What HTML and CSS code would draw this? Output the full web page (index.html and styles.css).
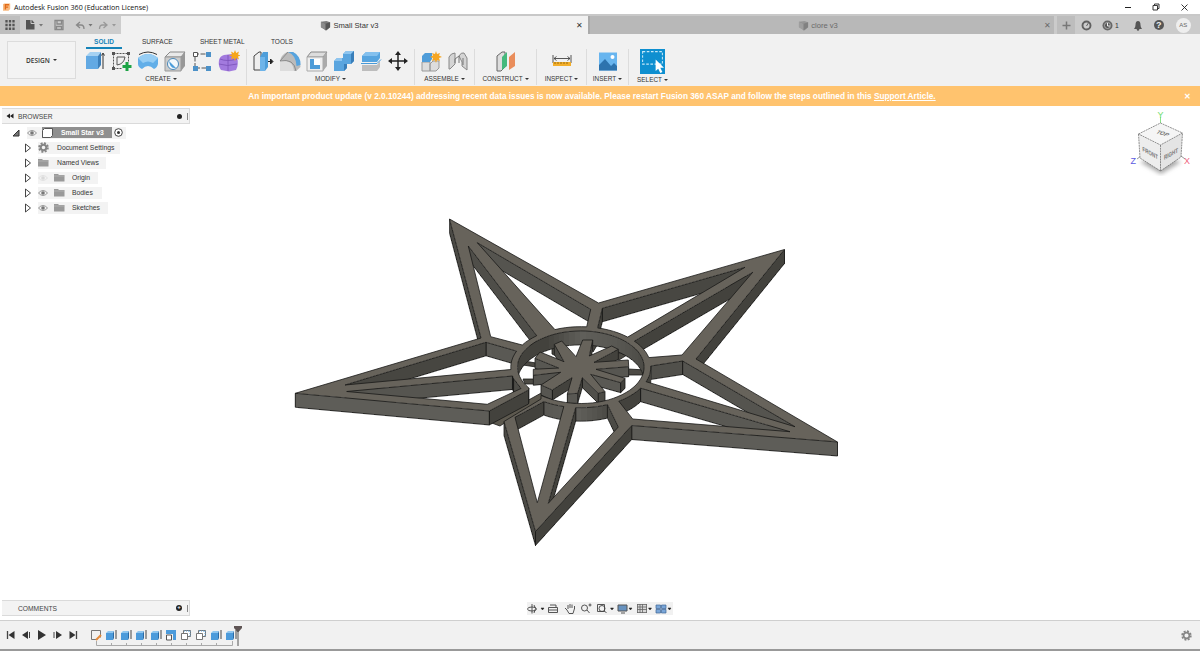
FILE: index.html
```html
<!DOCTYPE html>
<html lang="en">
<head>
<meta charset="utf-8">
<title>Autodesk Fusion 360</title>
<link rel="stylesheet" href="styles.css">
</head>
<body>
<svg class="defs" width="0" height="0">
  <defs>
    <symbol id="body" viewBox="0 0 22 22"><path d="M3 6l4-4h11l-3 4z" fill="#a5d1f2"/><path d="M3 6h12v13H3z" fill="#62a9e3"/><path d="M15 6l3-4v13l-3 4z" fill="#3b7fba"/></symbol>
    <symbol id="folder" viewBox="0 0 11 9"><path d="M0 1h4l1 1h5.500v6.500H0z" fill="#9a9a9a"/><path d="M0 3h10.500" stroke="#c4c4c4" stroke-width=".5"/></symbol>
    <symbol id="eye" viewBox="0 0 11 8"><path d="M.5 4Q5.500-1.500 10.500 4 5.500 9.500.5 4z" fill="#f2f2f2" stroke="#8d8d8d"/><circle cx="5.500" cy="4" r="2" fill="#777"/></symbol>
    <symbol id="tri" viewBox="0 0 8 10"><path d="M1.500 1v8l5-4z" fill="#fff" stroke="#333" stroke-width=".9"/></symbol>
    <symbol id="extr" viewBox="0 0 12 12"><path d="M1 4l2-2h6L8 4z" fill="#8fc6ef"/><path d="M1 4h7v7H1z" fill="#4c9bdb"/><path d="M8 4l1-2v7l-1 2z" fill="#2b6ca6"/><path d="M11 1v9" stroke="#333" stroke-width=".9"/></symbol>
    <symbol id="cube" viewBox="0 0 12 12"><path d="M1 2l6-1 4 1.500V8l-4 3.500L1 8z" fill="#7c7c7c"/><path d="M1 2l5 2 5-1.500V8l-5 3.500z" fill="#555"/><path d="M1 2l5 2v7L1 8z" fill="#8a8a8a"/></symbol>
    <symbol id="copy" viewBox="0 0 12 12"><path d="M1.500 4.500h6v6h-6zM3.500 4V1.500h7v6H8" fill="#fff" stroke="#666" stroke-width=".9"/><path d="M4 2h6M10 2v5" stroke="#58a2da" stroke-dasharray="1 1"/></symbol>
  </defs>
</svg>

<header class="titlebar">
  <svg class="logo" viewBox="0 0 10 10"><path d="M0 1l1.500-1H9v7l-2 2H0z" fill="#f8ba80"/><path d="M3 7.500v-6h4.500M3 4.500h3.500" stroke="#e26b18" stroke-width="1.700" fill="none"/></svg>
  <span class="app-name">Autodesk Fusion 360 (Education License)</span>
  <svg class="win" width="66" height="12" viewBox="0 0 66 12"><path d="M1 6.500h6" stroke="#222"/><path d="M29 4.500h4.500v4.500H29zM30.500 4V3H35v4.500h-1.500" stroke="#222" fill="none" stroke-width=".9"/><path d="M57.500 3.500l6 6m0-6l-6 6" stroke="#222" stroke-width=".9"/></svg>
</header>

<nav class="docbar">
  <div class="quick">
    <span class="grid-btn"><svg width="10" height="10" viewBox="0 0 10 10"><path d="M1.500 0v10M5 0v10M8.500 0v10" stroke="#555" stroke-width="2.300" stroke-dasharray="2.500 1.200"/></svg></span>
    <svg width="80" height="14" viewBox="0 0 80 14"><path d="M2 2h6l2.500 3v6.500H2z" fill="#555"/><path d="M7 1.500v4h4" stroke="#ccc" fill="none"/><path d="M13.500 6h4l-2 2.500zM63 6h4l-2 2.500z" fill="#777" transform="translate(1.500 0)"/><path d="M31 2.500h8v9h-8zM33 3v3h4.500V3M32.500 11V8.500h5V11" stroke="#888" fill="none" stroke-width="1.300"/><path d="M53 7h4q3 0 3 4M56 4l-3.500 3L56 10" stroke="#888" fill="none" stroke-width="1.300"/></svg>
    <svg class="redo" width="20" height="14" viewBox="0 0 20 14"><path d="M1.500 11q0-4 3-4h4M5.500 4L9 7l-3.500 3" stroke="#999" fill="none" stroke-width="1.300"/><path d="M14 6h4l-2 2.500z" fill="#999"/></svg>
  </div>
  <div class="tab active"><svg width="11" height="11"><use href="#cube"/></svg><span>Small Star v3</span><i class="x">✕</i></div>
  <div class="tab idle"><svg width="11" height="11"><use href="#cube"/></svg><span>clore v3</span><i class="x">✕</i></div>
  <div class="plus"><svg width="9" height="9" viewBox="0 0 9 9"><path d="M4.500.5v8M.5 4.500h8" stroke="#777" stroke-width="1.500"/></svg></div>
  <div class="status">
    <svg width="11" height="11" viewBox="0 0 11 11"><circle cx="5.500" cy="5.500" r="4" fill="none" stroke="#606060" stroke-width="1.900"/><path d="M5.500 6l2.500-4" stroke="#606060"/></svg>
    <span class="job"><svg width="11" height="11" viewBox="0 0 11 11"><circle cx="5.500" cy="5.500" r="5" fill="#666"/><circle cx="5.500" cy="5.500" r="3" fill="#555" stroke="#bbb" stroke-width=".8"/><path d="M5.500 3v3h2.500" stroke="#eee" fill="none"/></svg>1</span>
    <svg class="bell" width="10" height="11" viewBox="0 0 10 11"><path d="M1 9q1.500-1.500 1.500-4Q2.500 1 5 1t2.500 4Q7.500 7.500 9 9z" fill="#555"/><circle cx="5" cy="9.500" r="1.200" fill="#555"/></svg>
    <span class="help">?</span>
    <span class="avatar">AS</span>
  </div>
</nav>

<section class="ribbon">
  <div class="workspace">DESIGN <b class="dd"></b></div>
  <div class="ribbon-main">
    <div class="modes"><span class="solid">SOLID</span><span class="surface">SURFACE</span><span class="sheet">SHEET METAL</span><span>TOOLS</span></div>
    <div class="groups">
      <div class="group create">
        <div class="icons">
          <svg viewBox="0 0 22 22"><use href="#body"/><path d="M20 19V4M18.500 5.500L20 3l1.500 2.500" stroke="#333" fill="none"/></svg>
          <svg viewBox="0 0 22 22"><path d="M3.500 3.500h15v8M3.500 3.500v15h9" fill="none" stroke="#555" stroke-dasharray="2 1"/><path d="M7 15V7h8q-1 7-8 8z" fill="none" stroke="#555"/><path d="M2 2h3v3H2zM17 2h3v3h-3zM2 17h3v3H2z" fill="#555"/><path d="M17 12v9M12.500 16.500h9" stroke="#1da345" stroke-width="3"/></svg>
          <svg viewBox="0 0 22 22"><path d="M1 8q10-8 20 0v6q-1 4-4 5-3-3-6-3t-6 3q-4-2-4-5z" fill="#62aee8"/><path d="M1 8q10-8 20 0l-5 5q-5-3-10 0z" fill="#96cdf4"/><path d="M2 4.500q9-5 18 0" fill="none" stroke="#333"/></svg>
          <svg viewBox="0 0 22 22"><path d="M1 7l5-5h15l-4 5z" fill="#e9e9e9" stroke="#888"/><path d="M17 7l4-5v14l-4 5z" fill="#989898"/><path d="M1 7h16v14H1z" fill="#ccc" stroke="#999"/><circle cx="9" cy="14" r="5.500" fill="#f2f8fc" stroke="#4a87b7"/><path d="M5 11l7 7q-6 1-7-7z" fill="#4c9dda"/></svg>
          <svg viewBox="0 0 22 22"><path d="M4 18V4h14M4 18h14" fill="none" stroke="#555" stroke-dasharray="5 1.500"/><path d="M2.500 2.500h4v4h-4z" fill="#fff" stroke="#555"/><path d="M15 2h5v5h-5zM2 16h5v5H2zM15 16h5v5h-5z" fill="#4c91c8"/></svg>
          <svg viewBox="0 0 22 22"><path d="M1 10q1-4 5-5l8-1 5 3q2 8-1 13l-7 1.500L3 20Q0 16 1 10z" fill="#a27ade"/><path d="M2 9q7 3 17 0M10 5v16M1 14q8 3 18 0" stroke="#7a51b8" stroke-width=".8" fill="none"/><path d="M17 0l1.200 3L21 1.500l-1 3 3 1-3 1 1 3-3-1.500L17 11l-1.200-3L13 9.500l1-3-3-1 3-1-1-3 2.800 1.500z" fill="#f6a61b"/></svg>
        </div>
        <div class="label">CREATE<b class="dd"></b></div>
      </div>
      <div class="group modify">
        <div class="icons">
          <svg viewBox="0 0 22 22"><path d="M2 6l5-4h2v18H2z" fill="#eee" stroke="#444"/><path d="M8 7l3-5h5v15l-3 4H8z" fill="#4e9eda"/><path d="M8 7h5v14H8z" fill="#6eb4e9"/><path d="M16 11.500h3M18.500 9l2.500 2.500-2.500 2.500z" stroke="#222" fill="#222"/></svg>
          <svg viewBox="0 0 22 22"><path d="M1 11q1-6 7-9h6q7 3 7.500 15L17 21H1z" fill="#bbb"/><path d="M1 11h5q8 0 9 10H1z" fill="#ddd"/><path d="M9 2h5q8 4 7.500 13l-4 1Q17 5 9 2z" fill="#57a4df"/><path d="M1 11l8-9M1 11q14-3 16 10" fill="none" stroke="#777" stroke-width=".7"/></svg>
          <svg viewBox="0 0 22 22"><path d="M1 7l4-5h16l-4 5z" fill="#ddd" stroke="#888"/><path d="M17 7l4-5v14l-4 5z" fill="#aaa"/><path d="M1 7h16v14H1z" fill="#eee" stroke="#aaa"/><path d="M4 9h10v10H4z" fill="#4e9cd8"/><path d="M8 9h6v6H8z" fill="#fff"/></svg>
          <svg viewBox="0 0 22 22"><path d="M1 11l3-3h6V4l3-3h8v10l-3 3h-4v4l-3 3H1z" fill="#5aa5df"/><path d="M1 11l3-3h5v3zM10 4l3-3h8l-3 3z" fill="#8ec5ef"/><path d="M21 1v10l-3 3V4zM14 14v4l-3 3v-7z" fill="#397eb9"/></svg>
          <svg viewBox="0 0 22 22"><path d="M2 6l4-4h14v6l-3 4H2z" fill="#56a4df"/><path d="M2 6l4-4h14l-3 4z" fill="#83c0ee"/><path d="M2 15h15l3-4v6l-3 4H2z" fill="#bdbdbd"/><path d="M1 13.500h16l4-4" stroke="#4699d7" fill="none"/></svg>
          <svg viewBox="0 0 22 22"><path d="M11 3v16M3 11h16" stroke="#222" stroke-width="1.500"/><path d="M11 1l3 4H8zM11 21l3-4H8zM1 11l4-3v6zM21 11l-4-3v6z" fill="#222"/></svg>
        </div>
        <div class="label">MODIFY<b class="dd"></b></div>
      </div>
      <div class="group assemble">
        <div class="icons">
          <svg viewBox="0 0 22 22"><path d="M2 12h8v9H2zM10 14l3-3h6v7l-3 3h-6z" fill="#ddd" stroke="#999"/><path d="M2 6l3-3h7v6l-2 3H2z" fill="#4e9cd9"/><path d="M16 1l1 3 3-1-1 2.500 3 1.500-3 1 1 3-3-1-1 3-1-3-3 1 1-3-3-1 3-1.500L12 3l3 1z" fill="#f5a623"/></svg>
          <svg viewBox="0 0 22 22"><path d="M2 7q2-4 6-4v11l-5 5H2zM12 6q2-4 5-3l3 5v12l-5-4v-4z" fill="#d4d4d4" stroke="#888"/><path d="M8 13V9l4-3v7M16 8v7" fill="none" stroke="#777"/></svg>
        </div>
        <div class="label">ASSEMBLE<b class="dd"></b></div>
      </div>
      <div class="group construct">
        <div class="icons"><svg viewBox="0 0 22 22"><path d="M2 6l5-4h3v15l-4 4H2z" fill="#ddd" stroke="#666"/><path d="M7 7l5-5v14l-5 4z" fill="#45b97c"/><path d="M14 7l6-5v14l-6 4z" fill="#e98d5b"/></svg></div>
        <div class="label">CONSTRUCT<b class="dd"></b></div>
      </div>
      <div class="group inspect">
        <div class="icons"><svg viewBox="0 0 22 22"><path d="M2 5v8M20 5v8M3 8.500h16M5.500 6.500l-2.500 2 2.500 2M16.500 6.500l2.500 2-2.500 2" fill="none" stroke="#444" stroke-width=".9"/><path d="M2 12h18v4H2z" fill="#f2ae2a"/><path d="M4 12v2M7 12v2M10 12v2M13 12v2M16 12v2" stroke="#875c08" stroke-width=".8"/></svg></div>
        <div class="label">INSPECT<b class="dd"></b></div>
      </div>
      <div class="group insert">
        <div class="icons"><svg viewBox="0 0 22 22"><path d="M2 2.500h18v18H2z" fill="#68b5ef"/><path d="M2 15l6-6 6 7 3-3 3 3v4.500H2z" fill="#2d73ae"/><circle cx="15.500" cy="7" r="2" fill="#fff"/></svg></div>
        <div class="label">INSERT<b class="dd"></b></div>
      </div>
      <div class="group select">
        <div class="icons"><svg class="big" viewBox="0 0 24 24"><path d="M0 0h24v24H0z" fill="#0e8fd0"/><path d="M2.500 2.500h19v12h-19z" fill="none" stroke="#c5e8f8" stroke-dasharray="2.500 1.500"/><path d="M15 10v11l2.500-2 2 4 2-1-2-4h3.500z" fill="#fff"/></svg></div>
        <div class="label">SELECT<b class="dd"></b></div>
      </div>
    </div>
  </div>
</section>

<div class="banner"><p>An important product update (v 2.0.10244) addressing recent data issues is now available. Please restart Fusion 360 ASAP and follow the steps outlined in this <u>Support Article.</u></p><i>✕</i></div>

<main class="canvas">
  <svg id="model" class="model" viewBox="280 204 580 356" width="580" height="356"></svg>

  <aside class="browser">
    <div class="panel-head"><svg width="8" height="6" viewBox="0 0 8 6"><path d="M4 .5v5L.5 3zM7.500.5v5L4 3z" fill="#222"/></svg><span>BROWSER</span><b class="dot"></b><em></em></div>
    <div class="row root"><svg width="8" height="8" viewBox="0 0 8 8"><path d="M7 1v6H1z" fill="#777" stroke="#333"/></svg><span class="cell"><svg class="eye" width="10" height="8"><use href="#eye"/></svg><span class="sel"><svg width="11" height="10" viewBox="0 0 11 10"><path d="M.5 2.500l2-2h8v7l-2 2h-8z" fill="#fff" stroke="#555"/></svg>Small Star v3</span><svg class="radio" width="9" height="9" viewBox="0 0 9 9"><circle cx="4.500" cy="4.500" r="3.800" fill="#fff" stroke="#333" stroke-width=".9"/><circle cx="4.500" cy="4.500" r="1.500" fill="#333"/></svg></span></div>
    <div class="row"><svg width="8" height="10"><use href="#tri"/></svg><span class="cell w1"><svg width="11" height="11" viewBox="0 0 11 11"><circle cx="5.500" cy="5.500" r="4.400" fill="none" stroke="#858585" stroke-width="1.800" stroke-dasharray="2 1.450"/><circle cx="5.500" cy="5.500" r="2.800" fill="none" stroke="#858585" stroke-width="2"/></svg>Document Settings</span></div>
    <div class="row"><svg width="8" height="10"><use href="#tri"/></svg><span class="cell w2"><svg width="11" height="9"><use href="#folder"/></svg>Named Views</span></div>
    <div class="row"><svg width="8" height="10"><use href="#tri"/></svg><span class="cell w3"><svg class="faint" width="10" height="8"><use href="#eye"/></svg><svg width="11" height="9"><use href="#folder"/></svg>Origin</span></div>
    <div class="row"><svg width="8" height="10"><use href="#tri"/></svg><span class="cell w4"><svg width="10" height="8"><use href="#eye"/></svg><svg width="11" height="9"><use href="#folder"/></svg>Bodies</span></div>
    <div class="row"><svg width="8" height="10"><use href="#tri"/></svg><span class="cell w5"><svg width="10" height="8"><use href="#eye"/></svg><svg width="11" height="9"><use href="#folder"/></svg>Sketches</span></div>
  </aside>

  <svg class="viewcube" width="64" height="70" viewBox="1128 108 64 70">
    <defs><filter id="soft"><feGaussianBlur stdDeviation="2"/></filter></defs>
    <path d="M1140 162l21 12 20-12-20-7z" fill="#aaa" filter="url(#soft)"/>
    <path d="M1160.500 123v-6M1141 156l-4 3M1181 156l4 3" stroke="#999"/>
    <path d="M1160.500 123v-6" stroke="#8be38b"/>
    <path d="M1138.500 134l22-11 22 10-21.500 12z" fill="#f5f5f5"/><path d="M1138.500 134l22 11v26l-20.500-13z" fill="#ededed"/><path d="M1182.500 133l-22 12v26l20.500-14z" fill="#e4e4e4"/>
    <path d="M1138.500 134l22-11 22 10-22 12zM1138.500 134l1.500 24 20.500 13 20.500-14 1.500-24M1160.500 145v26" fill="none" stroke="#666" stroke-width=".7" stroke-dasharray="2 .7"/>
    <g class="cube-text"><text transform="matrix(.95 .3 -.75 .7 1155.500 133)">TOP</text><text transform="matrix(.75 .42 .05 1.100 1142.500 151)">FRONT</text><text transform="matrix(.75 -.42 0 1.100 1164 160)">RIGHT</text></g>
    <g class="axis"><text x="1157.500" y="118" fill="#72dd72">Y</text><text x="1130.500" y="164" fill="#5a5ae0">Z</text><text x="1184" y="164" fill="#ef6680">X</text></g>
  </svg>

  <div class="comments panel-head"><span>COMMENTS</span><b class="dot add">+</b><em></em></div>

  <svg class="navbar" width="146" height="13" viewBox="527 602 146 13">
    <rect x="527" y="602" width="146" height="13" fill="#f1f1f1"/>
    <g fill="none" stroke="#444" stroke-width=".9"><ellipse cx="532" cy="609" rx="4.500" ry="2"/><path d="M532 604v9.500M534 605q3 3 0 8"/><path d="M548.500 607.500h9v5h-9zM550 605h6v2M549 610h8"/><path d="M567 610l-2-2M567 610l2 3.500h4l1.500-5M568 609v-4M570 608v-4M572 608v-3.500M574.500 609v-3"/><circle cx="584.500" cy="608" r="3"/><path d="M587 610l2.500 3M588.500 605h3M590 603.500v3M597.500 604.500h7v7h-7z"/><circle cx="602" cy="608.500" r="3"/><path d="M604.500 611l2 2"/></g>
    <path d="M618 605h9v6h-9z" fill="#6792bf" stroke="#555"/><path d="M621 613h4" stroke="#555"/>
    <path d="M637 604h10v9h-10z" fill="#d8d8d8"/><path d="M637 604.500h10M637 607h10M637 609.500h10M637 612.500h10M637.500 604v9M640 604v9M642.500 604v9M646.500 604v9" stroke="#666" stroke-width=".8"/>
    <path d="M656 605h4.500v3.500H656zM661.500 605h4.500v3.500h-4.500zM656 609.500h4.500v3.500H656zM661.500 609.500h4.500v3.500h-4.500z" fill="#7aa6d8" stroke="#3c6495" stroke-width=".7"/>
    <path d="M541 608h3l-1.500 2zM610.500 608h3l-1.500 2zM629 608h3l-1.500 2zM648.500 608h3l-1.500 2zM668 608h3l-1.500 2z" fill="#222" stroke="#222" stroke-width=".5"/>
  </svg>
</main>

<footer class="timeline">
  <svg width="72" height="10" viewBox="0 0 72 10"><path d="M1.500 1v8M70.500 1v8" stroke="#444" stroke-width="1.300"/><path d="M8.500 1v8L2.500 5zM22 1v8l-6-4zM32 0v10l8-5zM50 1v8l6-4zM63.500 1v8l6-4z" fill="#333"/><path d="M23.500 2v6M48 2v6" stroke="#444"/></svg>
  <div class="steps">
    <div class="features">
      <svg viewBox="0 0 12 12"><path d="M1.500 1.500h9v7M1.500 1.500v9h6" stroke="#777" fill="none"/><path d="M6 11l5-5" stroke="#e58b3b" stroke-width="2"/></svg>
      <svg><use href="#extr"/></svg><svg><use href="#extr"/></svg><svg><use href="#extr"/></svg><svg><use href="#extr"/></svg>
      <svg viewBox="0 0 12 12"><path d="M1 1h10v10H8V5H1z" fill="#4c9bdb"/><path d="M1.500 6h5v5h-5z" fill="#fff" stroke="#555"/></svg>
      <svg><use href="#copy"/></svg><svg><use href="#copy"/></svg><svg><use href="#extr"/></svg><svg><use href="#extr"/></svg>
    </div>
    <svg width="137" height="5" viewBox="0 0 137 5"><path d="M.5 0v4.500h136V0M15.500 2v2M30.500 2v2M45.500 2v2M60.500 2v2M75.500 2v2M90.500 2v2M105.500 2v2M120.500 2v2" fill="none" stroke="#aaa"/></svg>
    <svg class="marker" width="8" height="20" viewBox="0 0 8 20"><path d="M0 0h8v2L4.500 6h-1L0 2z" fill="#5f5555"/><path d="M4 4v16" stroke="#555"/></svg>
  </div>
  <svg class="gear" width="11" height="11" viewBox="0 0 11 11"><circle cx="5.500" cy="5.500" r="4.400" fill="none" stroke="#858585" stroke-width="1.600" stroke-dasharray="2 1.450"/><circle cx="5.500" cy="5.500" r="2.900" fill="none" stroke="#858585" stroke-width="1.700"/></svg>
</footer>
<script src="model.js"></script>
</body>
</html>
```
FILE: styles.css
```css
* { box-sizing: border-box; }
body { margin: 0; width: 1200px; height: 651px; overflow: hidden; display: flex; flex-direction: column; background: #fff; font-family: "Liberation Sans", Arial, sans-serif; font-size: 6.800px; color: #333; }
svg { flex: none; display: block; }
.defs { position: absolute; }
.dd { display: inline-block; border: 2px solid transparent; border-top: 2.500px solid #333; border-bottom: 0; margin-left: 3px; vertical-align: 1.500px; }

.titlebar { height: 14px; display: flex; align-items: center; padding-left: 3px; }
.logo { width: 8px; height: 9px; }
.app-name { margin-left: 3px; font-family: "Open Sans", sans-serif; font-size: 7.100px; color: #111; white-space: nowrap; }
.win { margin-left: auto; margin-right: 10px; }

.docbar { height: 20px; display: flex; background: #cbcbcb; border-top: 2px solid #c8c8c8; }
.quick { width: 121px; display: flex; align-items: center; background: #cdcdcd; }
.grid-btn { width: 20px; height: 18px; display: flex; align-items: center; justify-content: center; background: #bebebe; margin-right: 4px; }
.redo { margin-left: -6px; }
.tab { display: flex; align-items: center; justify-content: center; position: relative; gap: 2px; font-size: 7.600px; padding-top: 1px; }
.tab .x { position: absolute; right: 5px; font-style: normal; font-size: 8px; }
.active { width: 467px; background: #f1f1f1; padding-right: 10px; }
.idle { width: 466px; background: #b8b8b8; color: #6a6a6a; border-left: 2px solid #aaa; padding-right: 8px; }
.idle .x { right: 3px; }
.idle svg { opacity: .55; }
.plus { width: 18px; margin-left: 3px; background: #bdbdbd; display: flex; align-items: center; justify-content: center; }
.status { flex: 1; display: flex; align-items: center; padding-left: 6px; }
.job { display: flex; gap: 2px; align-items: center; margin-left: 10px; }
.bell { margin-left: 14px; }
.help { width: 10px; height: 10px; border-radius: 5px; background: #555; color: #eee; font-weight: bold; font-size: 9px; line-height: 10px; text-align: center; margin-left: 11px; }
.avatar { width: 15px; height: 15px; border-radius: 8px; background: #eee; color: #666; font-size: 6px; line-height: 15px; text-align: center; margin-left: 12px; }

.ribbon { height: 52px; display: flex; background: #f1f1f1; }
.workspace { width: 69px; height: 38px; margin: 7px 0 0 7px; border: 1px solid #dcdcdc; background: #f3f3f3; display: flex; align-items: center; justify-content: center; font-family: "Open Sans", sans-serif; font-size: 6.500px; font-weight: 600; }
.modes { display: flex; height: 15px; line-height: 15px; font-size: 6.500px; padding-left: 10px; white-space: nowrap; }
.solid { width: 36px; text-align: center; color: #1583b8; font-weight: bold; border-bottom: 2px solid #1583b8; }
.surface { margin-left: 20px; width: 58px; }
.sheet { width: 71px; }
.groups { display: flex; height: 36px; }
.group { border-right: 1px solid #dcdcdc; display: flex; flex-direction: column; align-items: center; }
.icons { display: flex; gap: 5px; height: 25px; align-items: center; }
.icons svg { width: 22px; height: 22px; }
.icons .big { width: 25px; height: 25px; }
.label { font-size: 6.400px; line-height: 12px; white-space: nowrap; }
.label .dd { margin-left: 2px; }
.create { width: 171px; }
.modify { width: 168px; }
.assemble { width: 60px; }
.construct { width: 62px; }
.inspect { width: 50px; }
.insert { width: 42px; }
.select { width: 47px; border: 0; }

.banner { height: 20px; background: #ffc36e; display: flex; align-items: center; padding-right: 9px; color: #fff; }
.banner p { margin: 0 auto; padding-right: 0; font-size: 8.270px; font-weight: bold; white-space: nowrap; }
.banner i { font-style: normal; font-weight: bold; font-size: 8px; }

.canvas { height: 514px; position: relative; }
.model { position: absolute; left: 280px; top: 98px; }
.panel-head { width: 188px; height: 16px; display: flex; align-items: center; background: #f3f3f3; border: 1px solid #dadada; border-left: 0; padding-left: 4px; color: #444; font-size: 6.700px; }
.panel-head span { margin-left: 4px; }
.dot { width: 5px; height: 5px; border-radius: 3px; background: #222; margin-left: auto; }
.panel-head em { width: 1px; height: 7px; background: #888; margin: 0 1px 0 5px; }
.browser { padding: 2px 0 0 2px; }
.row { height: 15px; display: flex; align-items: center; padding-left: 22px; }
.root { padding-left: 10px; margin-top: 1px; }
.cell { height: 12px; display: flex; align-items: center; background: #f3f3f3; margin-left: 6px; white-space: nowrap; }
.root .cell { margin-left: 7px; }
.sel { display: flex; align-items: center; gap: 8px; background: #8f8f8f; color: #fff; font-weight: bold; height: 11px; width: 70px; margin-left: 5px; }
.radio { margin: 0 3px 0 2px; }
.w1, .w2 { gap: 8px; }
.w1 { width: 82px; }
.w2 { width: 68px; }
.w3, .w4, .w5 { gap: 7px; }
.w3 svg + svg, .w4 svg + svg, .w5 svg + svg { margin-left: -1px; }
.w3 { width: 60px; }
.w4 { width: 64px; }
.w5 { width: 70px; }
.faint { opacity: .2; }
.viewcube { position: absolute; left: 1128px; top: 2px; }
.cube-text { font-size: 6px; fill: #777; font-weight: bold; }
.axis { font-size: 9px; }
.comments { position: absolute; left: 2px; top: 494px; padding-left: 12px; }
.add { width: 6px; height: 6px; color: #fff; font-size: 6px; line-height: 5px; text-align: center; }
.navbar { position: absolute; left: 527px; top: 496px; }

.timeline { height: 31px; border-top: 1px solid #cfcfcf; border-bottom: 2px solid #999; background: #f1f1f1; display: flex; align-items: center; padding-left: 6px; }
.steps { position: relative; margin-left: 12px; width: 150px; padding-top: 4px; }
.features { display: flex; gap: 3px; }
.features svg { width: 12px; height: 12px; }
.steps > svg { margin-left: 6px; }
.steps > .marker { position: absolute; left: 144px; top: 1px; margin: 0; }
.gear { margin-left: auto; margin-right: 8px; }
```
FILE: model.js
```js
// Extruded star: each contour of the top face drops a wall straight down.
const NS = "http://www.w3.org/2000/svg";
const canvas = document.getElementById("model");

function add(d, attrs) {
  const p = document.createElementNS(NS, "path");
  p.setAttribute("d", d);
  for (const k in attrs) p.setAttribute(k, attrs[k]);
  canvas.appendChild(p);
}

// Points along an ellipse around the hub, angles in degrees (y grows down).
function arc(rx, ry, from, to) {
  const n = Math.max(2, Math.ceil(Math.abs(to - from) / 5));
  return Array.from({ length: n + 1 }, (_, i) => {
    const a = (from + (to - from) * i / n) * Math.PI / 180;
    const p = [580.8 + rx * Math.cos(a), 367.2 + ry * Math.sin(a)];
    p.smooth = i > 0 && i < n;
    return p;
  });
}
const ring = (x1, y1, x2, y2) => {
  const ang = (x, y) => Math.atan2((y - 367.2) / 40.5, (x - 580.8) / 70) * 180 / Math.PI;
  let a = ang(x1, y1), b = ang(x2, y2);
  if (b - a > 180) b -= 360;
  if (a - b > 180) b += 360;
  return arc(70, 40.5, a, b);
};

const outline = [
  [449.5, 219], [598.5, 303], [784.5, 249.5], [696, 359], [837.5, 442],
  [631.7, 425.5], [535.5, 531.5], [504, 421.5], [541, 399],
  ...arc(63.3, 36.3, 129, -215), [528.5, 390], [489.3, 411], [295.3, 393.3], [481, 338]
];
const holes = [
  [[468.3, 246], [490.7, 336.7], ...ring(522.3, 345, 535.7, 335)],
  [[477.3, 242.7], [590.7, 309.3], ...ring(586.7, 326.7, 554, 328.3)],
  [[745, 267.3], [602.3, 308.3], ...ring(598, 327, 628.3, 336.7)],
  [[752.7, 272.3], ...ring(635, 340.7, 648.3, 357.7), [682, 355]],
  [[682.7, 361], [795, 426.7], ...ring(647.3, 382, 650.7, 366)],
  [[790, 431.7], [632.7, 419], ...ring(620, 402.3, 641, 388.3)],
  [[618.3, 427], [548.3, 503.3], ...ring(575.7, 407.6, 607.7, 405)],
  [[537.3, 502.7], [515, 417.3], ...ring(543.3, 402, 564, 406)],
  [[346.7, 391.5], [487.3, 404.3], [521, 388.5], ...ring(514, 378.5, 512.3, 376)],
  [[345, 385], [486, 342.3], ...ring(516, 351, 510, 369.5)]
];
const hub = [
  [278, 90], [308, 90], [298, 138], [365, 108], [385, 118], [312, 157],
  [415, 150], [416, 170], [318, 178], [405, 205], [392, 218], [302, 193],
  [345, 245], [325, 250], [277, 203], [263, 250], [232, 252], [246, 203],
  [187, 240], [153, 225], [212, 187], [130, 196], [130, 178], [206, 174],
  [135, 145], [150, 126], [222, 155], [193, 103], [215, 93], [258, 140]
].map(([x, y]) => [490 + x / 3, 310 + y / 3]);

const area = pts => pts.reduce((s, p, i) => {
  const q = pts[(i + 1) % pts.length];
  return s + p[0] * q[1] - q[0] * p[1];
}, 0);

// Only edges whose wall faces the viewer; tone depends on the facing direction.
function walls(pts, isHole, h) {
  const dir = (area(pts) > 0) !== isHole ? 1 : -1;
  return pts.flatMap((p, i) => {
    const q = pts[(i + 1) % pts.length];
    const dx = (q[0] - p[0]) * dir, dy = (q[1] - p[1]) * dir;
    if (dx >= -0.05) return [];
    const s = dy / Math.hypot(dx, dy);
    const v = Math.round(s > 0 ? 94 - 27 * Math.min(1, s * 3) : 96 - 22 * -s);
    return [{ p, q, h, v, y: (p[1] + q[1]) / 2 }];
  });
}

const pathOf = pts => "M" + pts.map(p => p[0].toFixed(1) + " " + p[1].toFixed(1)).join("L") + "Z";
const edge = { fill: "none", stroke: "#191918", "stroke-width": 0.8 };

function drawWalls(list) {
  list.sort((a, b) => a.y - b.y).forEach(({ p, q, h, v }) => {
    const color = `rgb(${v},${v - 1},${v - 6})`;
    add(`M${p}L${q}v${h}L${p[0]} ${p[1] + h}Z`, { fill: color, "shape-rendering": "crispEdges" });
    add(`M${p[0]} ${p[1] + h}L${q[0]} ${q[1] + h}`, edge);
    if (!p.smooth) add(`M${p}v${h}`, edge);
    if (!q.smooth) add(`M${q}v${h}`, edge);
  });
}

const face = { fill: "#67635b", "fill-rule": "evenodd", stroke: "#191918", "stroke-width": 0.8, "stroke-linejoin": "round" };

// Recessed bars under the hub, and the strip in the opening of the ring.
add("M489 422L543 392l6 4-46 28-3 2z", { ...face, fill: "#5d594f" });
add("M524 361l12 2v4l-13-2zM523 379h11v5h-9zM628 369l18 1v5h-18zM616 352l11 3-8 5-8-3zM552 343l8 3v12l-8-4zM590 340l6-10 3 12-6 10z", { ...face, fill: "#4c4a44" });
drawWalls([...walls(outline, false, 14), ...holes.flatMap(h => walls(h, true, 13.5)), ...walls(hub, false, 10)]);
add([outline, ...holes].map(pathOf).join(""), face);
add(pathOf(hub), face);
```
